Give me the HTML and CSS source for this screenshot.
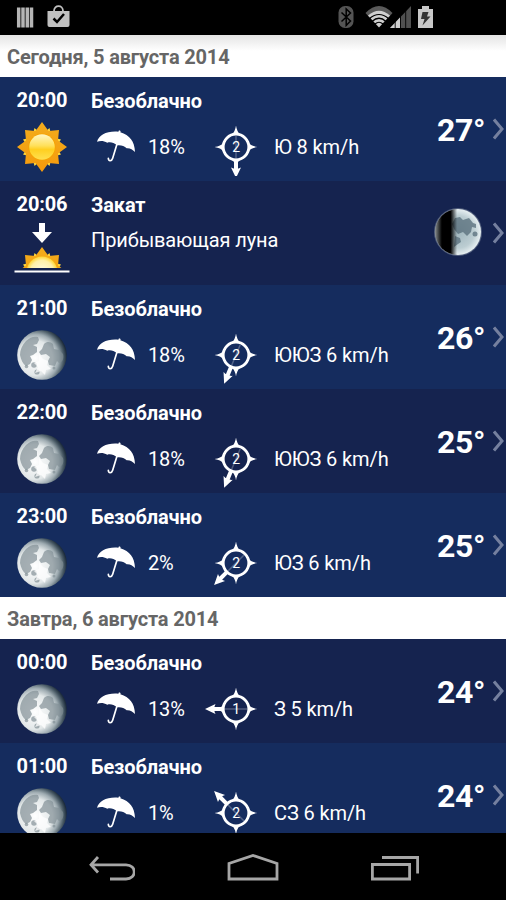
FILE: index.html
```html
<!DOCTYPE html>
<html lang="ru">
<head>
  <meta charset="UTF-8">
  <meta name="viewport" content="width=device-width, initial-scale=1.0">
  <title>Погода</title>
  <link rel="stylesheet" href="styles.css">
</head>
<body>
  <!-- Icons -->
  <svg class="defs" width="0" height="0">
    <defs>
      <linearGradient id="sunFace" x1="0" y1="0" x2="0" y2="1">
        <stop offset="0" stop-color="#fff6c4"/>
        <stop offset="0.45" stop-color="#ffe05a"/>
        <stop offset="0.6" stop-color="#ffcf20"/>
        <stop offset="1" stop-color="#ffe050"/>
      </linearGradient>
      <radialGradient id="sunsetFace" cx="50%" cy="50%" r="50%">
        <stop offset="0" stop-color="#fffbe6"/>
        <stop offset="0.75" stop-color="#fff0a8"/>
        <stop offset="1" stop-color="#ffd633"/>
      </radialGradient>
      <linearGradient id="sunRays" x1="0" y1="0" x2="0" y2="1">
        <stop offset="0" stop-color="#f3ac1c"/>
        <stop offset="1" stop-color="#f59a0c"/>
      </linearGradient>
      <radialGradient id="moonFace" cx="36%" cy="56%" r="64%">
        <stop offset="0" stop-color="#ffffff"/>
        <stop offset="0.55" stop-color="#e2e7e8"/>
        <stop offset="0.75" stop-color="#9eabb1"/>
        <stop offset="0.9" stop-color="#4a5b66"/>
        <stop offset="1" stop-color="#1c2b3c"/>
      </radialGradient>
      <linearGradient id="phase" x1="0" y1="0" x2="1" y2="0">
        <stop offset="0" stop-color="#000" stop-opacity="0.4"/>
        <stop offset="0.15" stop-color="#000"/>
        <stop offset="0.34" stop-color="#000"/>
        <stop offset="0.48" stop-color="#000" stop-opacity="0"/>
      </linearGradient>
      <radialGradient id="phaseMoon" cx="50%" cy="50%" r="50%">
        <stop offset="0" stop-color="#9fb5bd"/>
        <stop offset="0.7" stop-color="#bccdd2"/>
        <stop offset="1" stop-color="#e8f0f2"/>
      </radialGradient>
      <filter id="soft"><feGaussianBlur stdDeviation="0.5"/></filter>
    </defs>

    <symbol id="sun" viewBox="-25 -25 50 50">
      <use href="#rays"/>
      <circle r="13.600" fill="#f7a400"/>
      <circle r="12.800" fill="url(#sunFace)"/>
    </symbol>

    <g id="rays">
      <path fill="#ffd83c" d="M-7.500-19 -3-15 3-15 7.500-19 9-13 13-9 19-7.500 16-3 16 3 19 7.500 13 9 9 13 7.500 19 3 15-3 15-7.500 19-9 13-13 9-19 7.500-16 3-16-3-19-7.500-13-9-9-13Z"/>
      <path fill="url(#sunRays)" d="M0-25 6.500-16 17-17 16-6.500 25 0 16 6.500 17 17 6.500 16 0 25-6.500 16-17 17-16 6.500-25 0-16-6.500-17-17-6.500-16Z"/>
    </g>

    <symbol id="moon" viewBox="0 0 50 50">
      <circle cx="25" cy="25" r="24.800" fill="url(#moonFace)"/>
      <g fill="#7f8d94" fill-opacity="0.68" filter="url(#soft)">
        <path d="M9 11c4-4 8-5 12-4l1 3-2 4-4 1 4 2v5l-4 3-3 1 2 4-2 4-4 2c-3-2-5-6-6-11 0-5 2-10 6-14z"/>
        <path d="M27 14c3-3 7-2 9 0l1 5 5 1 4 4c1 4 0 8-4 9l-2-2-2 5-6-1-1-4 2-4-4-3-5 1-2-3 3-3z"/>
        <circle cx="17" cy="35" r="2.800"/>
        <circle cx="20" cy="42" r="2.600"/>
        <circle cx="9.500" cy="36.500" r="1.800"/>
        <circle cx="37" cy="38" r="1.500"/>
      </g>
      <path fill="#fff" fill-opacity="0.75" filter="url(#soft)" d="M22 24l4 5 5 2-1 4 4 4-5 1-1 5-4-4-6 2 3-6-4-4 5-2z"/>
    </symbol>

    <symbol id="umbrella" viewBox="0 0 120 102">
      <path fill="#fff" d="M3 38C9 18 33 5 67 8l2-4 5 2-1 4c28 8 43 28 44 59-8-8-15-12-25-11-7-7-18-11-29-9-9-8-20-11-29-8C23 35 13 35 3 38z"/>
      <path fill="none" stroke="#fff" stroke-width="5" stroke-linecap="round" d="M63 45 50 88c-3 10-13 9-13 0"/>
    </symbol>

    <symbol id="compass" viewBox="-21.500 -21.500 43 43">
      <circle r="12.800" fill="none" stroke="#fff" stroke-width="2.800"/>
      <path fill="#fff" d="M-4-13Q-1-15 0-21.500 1-15 4-13ZM-4 13Q-1 15 0 21.500 1 15 4 13ZM-13-4Q-15-1-21.500 0-15 1-13 4ZM13-4Q15-1 21.500 0 15 1 13 4Z"/>
    </symbol>

    <symbol id="arrow" viewBox="-32 -32 64 64">
      <path stroke="#fff" stroke-opacity="0.25" stroke-width="1.500" d="M0-11V12"/>
      <path stroke="#fff" stroke-width="4" d="M0 13V23"/>
      <path fill="#fff" d="M0 31-5 20.500Q0 23 5 20.500Z"/>
    </symbol>

    <symbol id="chevron" viewBox="0 0 11 22">
      <path fill="none" stroke="#75809f" stroke-width="3" d="M1 1.500 9 11 1 20.500"/>
    </symbol>
  </svg>

  <div class="screen">
    <div class="status-bar">
      <svg class="status-left" width="60" height="35" viewBox="0 0 60 35">
        <path stroke="#b5b5b5" stroke-width="3.500" d="M2.700 7.500V27.500M7 7.500V27.500M11.300 7.500V27.500M15.500 7.500V27.500"/>
        <path fill="#c0c0c0" d="M31.500 11h22v14q0 2-2 2h-18q-2 0-2-2z"/>
        <path fill="none" stroke="#c0c0c0" stroke-width="1.800" d="M38 11C38 4.500 47 4.500 47 11"/>
        <path fill="none" stroke="#000" stroke-width="2.500" d="M37.500 18.500l3.500 3.500 7-8"/>
      </svg>
      <svg class="status-right" width="100" height="35" viewBox="335 0 100 35">
        <rect x="338.500" y="6" width="15" height="22" rx="6.500" fill="#545454"/>
        <path fill="none" stroke="#000" stroke-width="1.500" d="M341.500 12.500l9 8.500-4.300 4.500V9l4.300 4-9 8.500"/>
        <path fill="#5a5a5a" d="M365.500 13Q379-1 392.500 13L388 18H370z"/>
        <path fill="#d0d0d0" d="M368 15.500Q379 6 390 15.500L379 27.500z"/>
        <path fill="none" stroke="#000" stroke-width="1.200" d="M369.500 18.500Q379 10.500 388.500 18.500M372 21.500Q379 15 386 21.500M375 24Q379 20.500 383 24"/>
        <path fill="#505050" d="M390 28 411 6V28z"/>
        <path fill="#d0d0d0" d="M390 28 400 17.500V28z"/>
        <path stroke="#000" stroke-width="0.900" d="M395.200 20V28M400.500 15V28M405.700 10V28"/>
        <path fill="#c8c8c8" d="M418 9h4V6h7v3h4v19h-15z"/>
        <path fill="#333" d="M422.500 12h6l-1.500 4.500h3.500l-8 9 2-6.500h-3.500z"/>
      </svg>
    </div>

    <div class="forecast">
      <h2 class="day day-first">Сегодня, 5 августа 2014</h2>

      <div class="row">
        <div class="when">
          <div class="time">20:00</div>
          <svg class="sky"><use href="#sun"/></svg>
        </div>
        <div class="info">
          <div class="title">Безоблачно</div>
          <div class="details">
            <svg class="umbrella"><use href="#umbrella"/></svg>
            <span class="rain">18%</span>
            <svg class="wind-icon" viewBox="-32 -32 64 60.500">
              <use href="#compass" x="-21.500" y="-21.500" width="43" height="43"/>
              <use href="#arrow" x="-32" y="-32" width="64" height="64"/>
              <text class="force" y="5">2</text>
            </svg>
            <span class="wind">Ю 8 km/h</span>
          </div>
        </div>
        <div class="temp">27°</div>
        <svg class="chevron"><use href="#chevron"/></svg>
      </div>

      <div class="row alt">
        <div class="when">
          <div class="time">20:06</div>
          <svg class="sunset" viewBox="0 0 56 52">
            <path fill="#fff" d="M25 1h6v9h7l-10 11-10-11h7z"/>
            <svg x="2" y="24" width="52" height="22" viewBox="-26 -26 52 22" overflow="hidden">
              <use href="#rays"/>
              <circle r="15.500" fill="url(#sunsetFace)"/>
            </svg>
            <path fill="#fff" d="M0.500 48.500h55v2h-55z"/>
          </svg>
        </div>
        <div class="info">
          <div class="title">Закат</div>
          <div class="note">Прибывающая луна</div>
        </div>
        <svg class="phase" viewBox="0 0 50 50">
          <circle cx="25" cy="25" r="24" fill="#53607e"/>
          <circle cx="25" cy="25" r="23" fill="url(#phaseMoon)"/>
          <g fill="#566e79" fill-opacity="0.75" filter="url(#soft)">
            <path d="M22 11l5-1 3 3 6-2 4 5 3 1v4l-4-1-1 5-4 4-4-4-5 2-4-5-2-5z"/>
            <path d="M22 29l5 2 1 4-3 2-4 3z"/>
            <circle cx="42" cy="27" r="2.500"/>
          </g>
          <circle cx="25" cy="25" r="23" fill="url(#phase)"/>
        </svg>
        <svg class="chevron"><use href="#chevron"/></svg>
      </div>

      <div class="row">
        <div class="when">
          <div class="time">21:00</div>
          <svg class="sky"><use href="#moon"/></svg>
        </div>
        <div class="info">
          <div class="title">Безоблачно</div>
          <div class="details">
            <svg class="umbrella"><use href="#umbrella"/></svg>
            <span class="rain">18%</span>
            <svg class="wind-icon" viewBox="-32 -32 64 60.500">
              <use href="#compass" x="-21.500" y="-21.500" width="43" height="43"/>
              <use class="ssw" href="#arrow" x="-32" y="-32" width="64" height="64"/>
              <text class="force" y="5">2</text>
            </svg>
            <span class="wind">ЮЮЗ 6 km/h</span>
          </div>
        </div>
        <div class="temp">26°</div>
        <svg class="chevron"><use href="#chevron"/></svg>
      </div>

      <div class="row alt">
        <div class="when">
          <div class="time">22:00</div>
          <svg class="sky"><use href="#moon"/></svg>
        </div>
        <div class="info">
          <div class="title">Безоблачно</div>
          <div class="details">
            <svg class="umbrella"><use href="#umbrella"/></svg>
            <span class="rain">18%</span>
            <svg class="wind-icon" viewBox="-32 -32 64 60.500">
              <use href="#compass" x="-21.500" y="-21.500" width="43" height="43"/>
              <use class="ssw" href="#arrow" x="-32" y="-32" width="64" height="64"/>
              <text class="force" y="5">2</text>
            </svg>
            <span class="wind">ЮЮЗ 6 km/h</span>
          </div>
        </div>
        <div class="temp">25°</div>
        <svg class="chevron"><use href="#chevron"/></svg>
      </div>

      <div class="row">
        <div class="when">
          <div class="time">23:00</div>
          <svg class="sky"><use href="#moon"/></svg>
        </div>
        <div class="info">
          <div class="title">Безоблачно</div>
          <div class="details">
            <svg class="umbrella"><use href="#umbrella"/></svg>
            <span class="rain">2%</span>
            <svg class="wind-icon" viewBox="-32 -32 64 60.500">
              <use href="#compass" x="-21.500" y="-21.500" width="43" height="43"/>
              <use class="sw" href="#arrow" x="-32" y="-32" width="64" height="64"/>
              <text class="force" y="5">2</text>
            </svg>
            <span class="wind">ЮЗ 6 km/h</span>
          </div>
        </div>
        <div class="temp">25°</div>
        <svg class="chevron"><use href="#chevron"/></svg>
      </div>

      <h2 class="day">Завтра, 6 августа 2014</h2>

      <div class="row alt">
        <div class="when">
          <div class="time">00:00</div>
          <svg class="sky"><use href="#moon"/></svg>
        </div>
        <div class="info">
          <div class="title">Безоблачно</div>
          <div class="details">
            <svg class="umbrella"><use href="#umbrella"/></svg>
            <span class="rain">13%</span>
            <svg class="wind-icon" viewBox="-32 -32 64 60.500">
              <use href="#compass" x="-21.500" y="-21.500" width="43" height="43"/>
              <use class="w" href="#arrow" x="-32" y="-32" width="64" height="64"/>
              <text class="force" y="5">1</text>
            </svg>
            <span class="wind">З 5 km/h</span>
          </div>
        </div>
        <div class="temp">24°</div>
        <svg class="chevron"><use href="#chevron"/></svg>
      </div>

      <div class="row">
        <div class="when">
          <div class="time">01:00</div>
          <svg class="sky"><use href="#moon"/></svg>
        </div>
        <div class="info">
          <div class="title">Безоблачно</div>
          <div class="details">
            <svg class="umbrella"><use href="#umbrella"/></svg>
            <span class="rain">1%</span>
            <svg class="wind-icon" viewBox="-32 -32 64 60.500">
              <use href="#compass" x="-21.500" y="-21.500" width="43" height="43"/>
              <use class="nw" href="#arrow" x="-32" y="-32" width="64" height="64"/>
              <text class="force" y="5">2</text>
            </svg>
            <span class="wind">СЗ 6 km/h</span>
          </div>
        </div>
        <div class="temp">24°</div>
        <svg class="chevron"><use href="#chevron"/></svg>
      </div>
    </div>

    <div class="nav-bar">
      <svg width="50" height="30" viewBox="0 0 50 30">
        <path fill="none" stroke="#a6a6a6" stroke-width="2.800" d="M13 3 6 10.800 13 18.500M6.500 10.800H41c11 0 11 14.200 0 14.200H25"/>
      </svg>
      <svg width="54" height="30" viewBox="0 0 54 30">
        <path fill="none" stroke="#a6a6a6" stroke-width="2.800" d="M3 25V9.500L27 1.500 51 9.500V25z"/>
      </svg>
      <svg width="50" height="30" viewBox="0 0 50 30">
        <path fill="none" stroke="#a6a6a6" stroke-width="2.800" d="M2.400 10.500H39.600V25H2.400zM12 3.500H47.600V19.500"/>
      </svg>
    </div>
  </div>
</body>
</html>
```
FILE: styles.css
```css
body {
  margin: 0;
  background-color: #000;
  font-family: Roboto, "Liberation Sans", sans-serif;
  font-size: 20px;
  line-height: 24px;
  letter-spacing: -0.12px;
  color: #fff;
}
svg {
  display: block;
  flex-shrink: 0;
}
.screen {
  display: flex;
  flex-direction: column;
  width: 506px;
  height: 900px;
  overflow: hidden;
}

/* Status bar */
.status-bar {
  display: flex;
  justify-content: space-between;
  height: 35px;
  flex-shrink: 0;
}
.status-left {
  margin-left: 16px;
}
.status-right {
  margin-right: 71px;
}

/* Forecast list */
.forecast {
  height: 798px;
  flex-shrink: 0;
  overflow: hidden;
}
.day {
  box-sizing: border-box;
  height: 42px;
  margin: 0;
  padding: 10px 7px;
  background-color: #fff;
  color: #666;
  font-size: 20px;
  font-weight: bold;
  letter-spacing: -0.17px;
}
.day-first {
  background: linear-gradient(#e4e4e4, #fff 16px);
}
.row {
  box-sizing: border-box;
  display: flex;
  height: 104px;
  padding-top: 11px;
  background-color: #152c5e;
}
.alt {
  background-color: #15234f;
}
.when {
  display: flex;
  flex-direction: column;
  align-items: center;
  width: 84px;
}
.time,
.title {
  font-weight: bold;
}
.sky {
  width: 50px;
  height: 50px;
  margin-top: 10px;
}
.sunset {
  width: 56px;
  height: 52px;
  margin-top: 6px;
}
.info {
  flex: 1;
  padding: 1px 0 0 7px;
}
.details {
  display: flex;
  height: 61px;
  padding-left: 5px;
}
.umbrella {
  width: 40px;
  height: 34px;
  margin-top: 16px;
}
.rain {
  width: 56px;
  margin: 22px 0 0 12px;
}
.wind-icon {
  width: 64px;
  height: 60.5px;
  margin-top: 2px;
}
.wind {
  margin: 22px 0 0 6px;
  white-space: nowrap;
}
.force {
  font-size: 14px;
  text-anchor: middle;
  fill: #fff;
}
.note {
  margin-top: 11px;
}
.temp {
  width: 56px;
  margin-top: 30px;
  font-size: 32px;
  font-weight: bold;
  letter-spacing: -0.4px;
}
.phase {
  width: 50px;
  height: 50px;
  margin: 15px 10px 0 0;
}
.chevron {
  width: 11px;
  height: 22px;
  margin: 30px 2px 0 0;
}

/* Wind directions, the arrow points south by default */
.ssw { transform: rotate(22.5deg); }
.sw { transform: rotate(45deg); }
.w { transform: rotate(90deg); }
.nw { transform: rotate(135deg); }

/* Navigation bar */
.nav-bar {
  display: flex;
  justify-content: space-between;
  height: 46px;
  padding: 21px 86px 0 85px;
}
```
